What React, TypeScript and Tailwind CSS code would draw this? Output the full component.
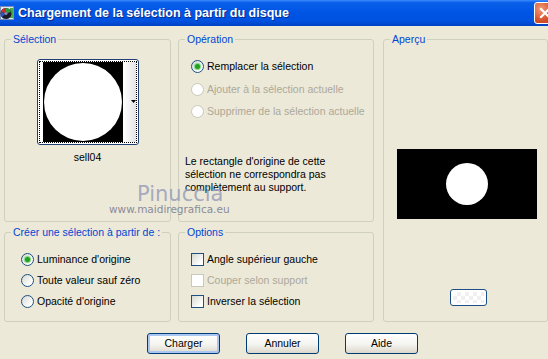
import React from 'react';

function Radio({ checked, disabled }: { checked?: boolean; disabled?: boolean }) {
  return (
    <span
      className={`flex h-[13px] w-[13px] shrink-0 items-center justify-center rounded-full border ${
        disabled ? 'border-[#cac8bb] bg-white' : 'border-[#1c5180] bg-[linear-gradient(135deg,#d8d8d2,#ffffff_80%)]'
      }`}
    >
      {checked && <span className="h-[5px] w-[5px] rounded-full bg-[#21a121] shadow-[0_0_1px_1px_#7bd57b]" />}
    </span>
  );
}

function Check({ disabled }: { disabled?: boolean }) {
  return (
    <span
      className={`block h-[13px] w-[13px] shrink-0 border ${
        disabled ? 'border-[#cac8bb] bg-white' : 'border-[#1c5180] bg-[linear-gradient(135deg,#d8d8d2,#ffffff_80%)]'
      }`}
    />
  );
}

function Group({ title, className, children }: { title: string; className: string; children?: React.ReactNode }) {
  return (
    <fieldset className={`rounded-[3px] border border-[#d0d0bf] ${className}`}>
      <legend className="ml-[6px] px-[2px] leading-[13px] text-[#0046d5]">{title}</legend>
      {children}
    </fieldset>
  );
}

function Row({ children, className }: { children: React.ReactNode; className: string }) {
  return <div className={`flex h-[13px] items-center gap-[3px] ${className}`}>{children}</div>;
}

function Button({ label, primary }: { label: string; primary?: boolean }) {
  return (
    <button
      className={`h-[21px] w-[73px] rounded-[3px] border border-[#003c74] bg-[linear-gradient(180deg,#ffffff,#f4f4f0_55%,#dcd7cb)] text-[10.5px] text-black ${
        primary ? 'shadow-[inset_0_0_0_2px_#aac6f2]' : ''
      }`}
    >
      {label}
    </button>
  );
}

export default function App() {
  return (
    <div className="relative h-[359px] w-[548px] overflow-hidden bg-[#ece9d8] font-['Liberation_Sans',Arial,sans-serif] text-[10.5px] text-black">
      {/* title bar */}
      <div className="flex h-[26px] items-center overflow-hidden bg-[linear-gradient(180deg,#3d8bff_0%,#0a5fe8_10%,#0055e5_45%,#0052e0_80%,#0042c4_100%)]">
        <svg width="14" height="15" viewBox="0 0 14 15" className="mt-[1px] shrink-0">
          <rect x="0.5" y="0.5" width="13" height="13" fill="#dfe8f7" stroke="#7a8fb5" />
          <rect x="10" y="2" width="3" height="10" fill="#49a84a" />
          <circle cx="6" cy="7.5" r="5.5" fill="#1a1a2a" />
          <path d="M6 7.5 L6 2 A5.5 5.5 0 0 1 11 6 Z" fill="#2f9a3a" />
          <path d="M6 7.5 L1 6 A5.5 5.5 0 0 1 6 2 Z" fill="#c23030" />
          <path d="M6 7.5 L2 11 A5.5 5.5 0 0 1 1 6 Z" fill="#3050c8" />
          <circle cx="6" cy="7.5" r="1.5" fill="#8a8aa0" />
        </svg>
        <span className="ml-[4px] text-[12.5px] font-bold leading-none text-white [text-shadow:1px_1px_0_#0a2a8a]">
          Chargement de la sélection à partir du disque
        </span>
        <div className="-mr-[8px] ml-auto flex h-[22px] w-[22px] shrink-0 items-center justify-center rounded-[3px] border border-white bg-[radial-gradient(circle_at_30%_30%,#f09a7a,#d8532c_55%,#b83a1a)]">
          <svg width="12" height="12" viewBox="0 0 12 12">
            <path d="M2 2 L10 10 M10 2 L2 10" stroke="white" strokeWidth="2.2" strokeLinecap="square" />
          </svg>
        </div>
      </div>

      {/* groups */}
      <div className="flex pl-[4px] pt-[7px]">
        <div className="flex w-[167px] flex-col gap-[4px]">
          <Group title="Sélection" className="h-[189px]">
            <div className="mx-auto mt-[13px] h-[86px] w-[102px] rounded-[3px] border border-[#1e3f73] bg-white p-[1px]">
              <div className="flex h-full border border-dotted border-black pl-[3px]">
                <svg width="80" height="80" viewBox="0 0 80 80" className="shrink-0">
                  <rect width="80" height="80" fill="#000" />
                  <circle cx="40" cy="40" r="39" fill="#fff" />
                </svg>
                <div className="flex flex-1 items-center justify-end bg-[linear-gradient(90deg,#ffffff,#e4e4e4)]">
                  <svg width="5" height="4" viewBox="0 0 5 4">
                    <path d="M0 0 H5 L2.5 3 Z" fill="#000" />
                  </svg>
                </div>
              </div>
            </div>
            <div className="mt-[6px] text-center leading-[13px]">sell04</div>
          </Group>
          <Group title="Créer une sélection à partir de :" className="h-[96px]">
            <div className="flex flex-col gap-[8px] pl-[16px] pt-[14px]">
              <Row className="">
                <Radio checked />
                <span>Luminance d'origine</span>
              </Row>
              <Row className="">
                <Radio />
                <span>Toute valeur sauf zéro</span>
              </Row>
              <Row className="">
                <Radio />
                <span>Opacité d'origine</span>
              </Row>
            </div>
          </Group>
        </div>

        <div className="ml-[7px] flex w-[196px] flex-col gap-[4px]">
          <Group title="Opération" className="h-[189px]">
            <div className="flex flex-col pl-[12px]">
              <Row className="mt-[14px]">
                <Radio checked />
                <span>Remplacer la sélection</span>
              </Row>
              <Row className="mt-[10px] text-[#aca899]">
                <Radio disabled />
                <span>Ajouter à la sélection actuelle</span>
              </Row>
              <Row className="mt-[9px] text-[#aca899]">
                <Radio disabled />
                <span>Supprimer de la sélection actuelle</span>
              </Row>
            </div>
            <p className="mt-[37px] pl-[6px] leading-[13px]">
              Le rectangle d'origine de cette
              <br />
              sélection ne correspondra pas
              <br />
              complètement au support.
            </p>
          </Group>
          <Group title="Options" className="h-[96px]">
            <div className="flex flex-col gap-[8px] pl-[12px] pt-[14px]">
              <Row className="">
                <Check />
                <span>Angle supérieur gauche</span>
              </Row>
              <Row className="text-[#aca899]">
                <Check disabled />
                <span>Couper selon support</span>
              </Row>
              <Row className="">
                <Check />
                <span>Inverser la sélection</span>
              </Row>
            </div>
          </Group>
        </div>

        <div className="ml-[9px] w-[165px]">
          <Group title="Aperçu" className="h-[289px]">
            <svg width="140" height="70" viewBox="0 0 140 70" className="ml-[13px] mt-[103px] block">
              <rect width="140" height="70" fill="#000" />
              <circle cx="70" cy="35" r="21" fill="#fff" />
            </svg>
            <div className="ml-[66px] mt-[70px] h-[17px] w-[37px] rounded-[3px] border border-[#1c4f86] bg-white p-[2px]">
              <div className="h-full w-full bg-[conic-gradient(#ececec_25%,#ffffff_0_50%,#ececec_0_75%,#ffffff_0)] bg-[length:8px_8px] opacity-80" />
            </div>
          </Group>
        </div>
      </div>

      {/* buttons */}
      <div className="mt-[11px] flex gap-[26px] pl-[147px]">
        <Button label="Charger" primary />
        <Button label="Annuler" />
        <Button label="Aide" />
      </div>

      {/* watermark */}
      <div className="pointer-events-none absolute left-[137px] top-[182px] font-['DejaVu_Sans',sans-serif] text-[21px] leading-[24px] text-[#9ca1bb]/90">
        Pinuccia
      </div>
      <div className="pointer-events-none absolute left-[109px] top-[203px] font-['DejaVu_Sans',sans-serif] text-[10.5px] leading-[13px] text-[#8b8b98]">
        www.maidiregrafica.eu
      </div>
    </div>
  );
}
